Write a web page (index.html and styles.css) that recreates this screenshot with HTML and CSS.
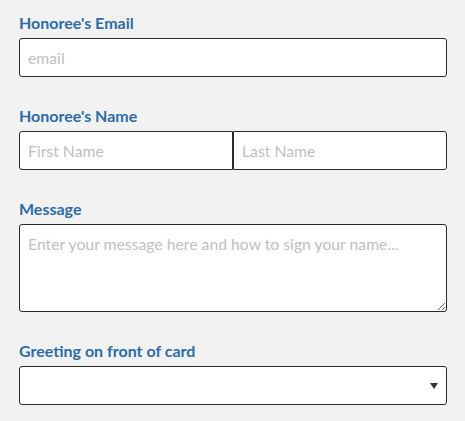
FILE: index.html
```html
<!DOCTYPE html>
<html>
<head>
<meta charset="utf-8">
<link rel="stylesheet" href="styles.css">
</head>
<body>
<form class="form">
  <div class="group">
    <label class="label">Honoree's Email</label>
    <input class="field" type="email" placeholder="email">
  </div>
  <div class="group">
    <label class="label">Honoree's Name</label>
    <div class="pair">
      <input class="field first" type="text" placeholder="First Name">
      <input class="field last" type="text" placeholder="Last Name">
    </div>
  </div>
  <div class="group">
    <label class="label">Message</label>
    <textarea class="field area" placeholder="Enter your message here and how to sign your name..."></textarea>
  </div>
  <div class="group">
    <label class="label">Greeting on front of card</label>
    <div class="select-wrap">
      <select class="field select"><option></option></select>
      <span class="arrow"></span>
    </div>
  </div>
</form>
</body>
</html>
```

FILE: styles.css
```css
* { box-sizing: border-box; }
html, body { margin: 0; padding: 0; background: #f2f2f2; }
body { font-family: Lato, "Open Sans", sans-serif; }
.form { padding: 13px 18px 0 19px; display: flex; flex-direction: column; gap: 29px; }
.group { display: flex; flex-direction: column; gap: 5px; }
.label { font-size: 16px; line-height: 20px; font-weight: 700; color: #2d6ca5; }
.field {
  display: block;
  width: 100%;
  height: 39px;
  margin: 0;
  border: 1px solid #2b2b2b;
  border-radius: 3px;
  background: #fff;
  padding: 0 8px;
  font-family: Lato, sans-serif;
  font-size: 15.75px;
  color: #333;
  outline: none;
}
.field::placeholder { color: #c0c0c0; opacity: 1; }
.pair { display: flex; }
.pair .field { flex: 1 1 0; min-width: 0; height: 39px; }
.first { border-radius: 3px 0 0 3px; }
.last { border-radius: 0 3px 3px 0; }
.area { height: 88px; padding: 8px 8px; line-height: 22px; resize: vertical; }
.select-wrap { position: relative; }
.select { height: 39px; appearance: none; -webkit-appearance: none; }
.arrow {
  position: absolute;
  right: 9px;
  top: 17px;
  width: 0; height: 0;
  border-left: 4px solid transparent;
  border-right: 4px solid transparent;
  border-top: 6px solid #333;
}
```
